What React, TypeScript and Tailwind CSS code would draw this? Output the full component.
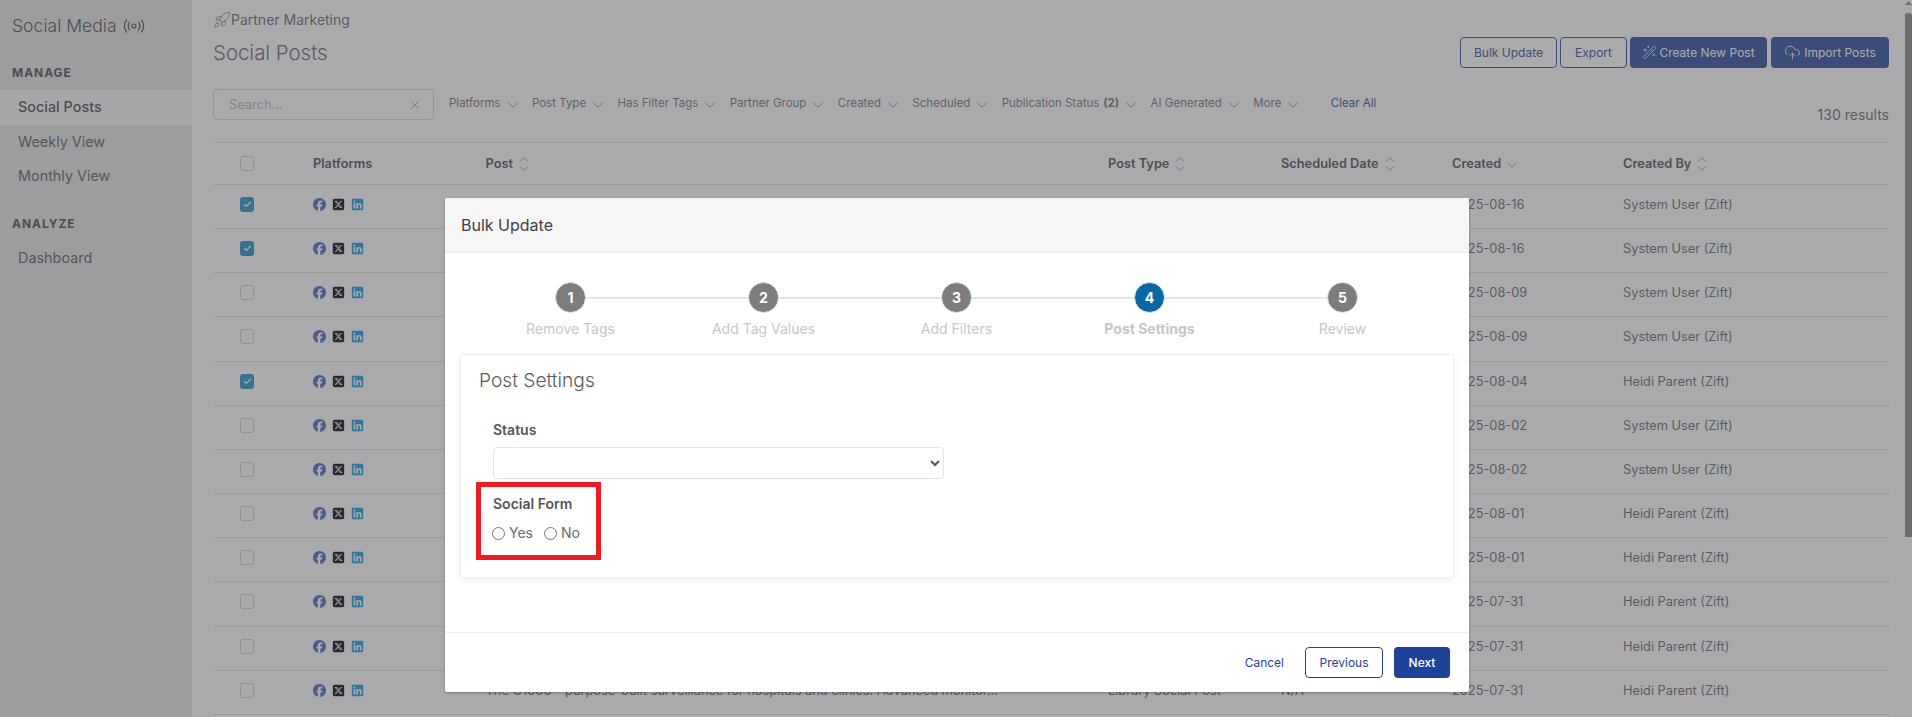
import React from "react";
import { X, Rocket, WandSparkles, CloudUpload, Check } from "lucide-react";
import { FaFacebook, FaSquareXTwitter, FaLinkedin } from "react-icons/fa6";

const filters: [string, string?][] = [
  ["Platforms"],
  ["Post Type"],
  ["Has Filter Tags"],
  ["Partner Group"],
  ["Created"],
  ["Scheduled"],
  ["Publication Status", "(2)"],
  ["AI Generated"],
  ["More"],
];

const rows: { checked: boolean; created: string; by: string }[] = [
  { checked: true, created: "2025-08-16", by: "System User (Zift)" },
  { checked: true, created: "2025-08-16", by: "System User (Zift)" },
  { checked: false, created: "2025-08-09", by: "System User (Zift)" },
  { checked: false, created: "2025-08-09", by: "System User (Zift)" },
  { checked: true, created: "2025-08-04", by: "Heidi Parent (Zift)" },
  { checked: false, created: "2025-08-02", by: "System User (Zift)" },
  { checked: false, created: "2025-08-02", by: "System User (Zift)" },
  { checked: false, created: "2025-08-01", by: "Heidi Parent (Zift)" },
  { checked: false, created: "2025-08-01", by: "Heidi Parent (Zift)" },
  { checked: false, created: "2025-07-31", by: "Heidi Parent (Zift)" },
  { checked: false, created: "2025-07-31", by: "Heidi Parent (Zift)" },
  { checked: false, created: "2025-07-31", by: "Heidi Parent (Zift)" },
];

const steps = ["Remove Tags", "Add Tag Values", "Add Filters", "Post Settings", "Review"];

function Chevron({ className }: { className?: string }) {
  return (
    <svg width="10" height="6" viewBox="0 0 10 6" fill="none" stroke="currentColor" strokeWidth="0.8" className={className}>
      <path d="M0.5 0.8 L5 5.2 L9.5 0.8" />
    </svg>
  );
}

function Sort() {
  return (
    <svg width="10" height="16" viewBox="0 0 10 16" fill="none" stroke="currentColor" strokeWidth="0.8" className="ml-[6px] text-[#77777b]">
      <path d="M1 5.5 L5 1.5 L9 5.5" />
      <path d="M1 10.5 L5 14.5 L9 10.5" />
    </svg>
  );
}

function BroadcastIcon() {
  return (
    <svg width="22" height="14" viewBox="0 0 22 14" fill="none" stroke="currentColor" strokeWidth="1.2" strokeLinecap="round">
      <circle cx="11" cy="7" r="2" />
      <path d="M6.5 3.2c-1.6 2.2-1.6 5.4 0 7.6" />
      <path d="M3.5 1c-2.8 3.4-2.8 8.6 0 12" />
      <path d="M15.5 3.2c1.6 2.2 1.6 5.4 0 7.6" />
      <path d="M18.5 1c2.8 3.4 2.8 8.6 0 12" />
    </svg>
  );
}

export default function App() {
  return (
    <div className="relative flex h-[717px] w-[1912px] overflow-hidden bg-white text-[#626266] [font-family:Inter,'Liberation_Sans',sans-serif]">
      {/* sidebar */}
      <aside className="w-[192px] shrink-0 bg-[#e4e4e6]">
        <div className="flex h-[52px] items-center gap-[6px] pl-[12px] text-[17.6px] font-light text-[#46464a]">
          <span>Social Media</span>
          <BroadcastIcon />
        </div>
        <div className="mt-[13px] pl-[12px] text-[12px] leading-[15px] font-bold tracking-[0.08em] text-[#46464a]">MANAGE</div>
        <div className="mt-[10px] flex h-[35px] items-center bg-[#f8f8f9] pb-[1px] pl-[18px] text-[14.4px] font-medium text-[#46464a]">Social Posts</div>
        <div className="flex h-[34px] items-center pb-[1px] pl-[18px] text-[14.4px] text-[#56565a]">Weekly View</div>
        <div className="flex h-[35px] items-center pb-[1px] pl-[18px] text-[14.4px] text-[#56565a]">Monthly View</div>
        <div className="mt-[22px] pl-[12px] text-[12px] leading-[15px] font-bold tracking-[0.08em] text-[#46464a]">ANALYZE</div>
        <div className="mt-[9px] flex h-[35px] items-center pl-[18px] text-[14.4px] text-[#56565a]">Dashboard</div>
      </aside>

      {/* main */}
      <main className="w-[1697px] shrink-0 pl-[21px]">
        <div className="w-[1676px]">
          <div className="flex h-[30px] items-end text-[14px] leading-[20px] text-[#626266]">
            <Rocket size={18} strokeWidth={1} className="mb-[1px]" />
            <span>Partner Marketing</span>
          </div>
          <div className="flex h-[38px] items-start justify-between">
            <h1 className="mt-[10px] text-[20.4px] leading-[26px] font-light text-[#606064]">Social Posts</h1>
            <div className="mt-[7px] flex gap-[3px] text-[12px]">
              <button className="h-[31px] w-[97px] rounded-[4px] border border-[#1e4299] text-[#2a4690]">Bulk Update</button>
              <button className="h-[31px] w-[67px] rounded-[4px] border border-[#1e4299] text-[#2a4690]">Export</button>
              <button className="flex h-[31px] w-[137px] items-center justify-center gap-[2px] rounded-[4px] bg-[#1e4299] text-white">
                <WandSparkles size={15} strokeWidth={1.25} />
                Create New Post
              </button>
              <button className="ml-[1px] flex h-[31px] w-[118px] items-center justify-center gap-[3px] rounded-[4px] bg-[#1e4299] text-white">
                <CloudUpload size={17} strokeWidth={1.25} />
                Import Posts
              </button>
            </div>
          </div>

          <div className="mt-[21px] flex h-[53px] items-start">
            <div className="flex h-[31px] w-[221px] items-center justify-between rounded-[4px] border border-[#d4d4d8] pr-[11px] pl-[15px] text-[12.8px] text-[#b2b2b6]">
              <span>Search...</span>
              <X size={14} strokeWidth={1.25} className="text-[#808084]" />
            </div>
            <div className="mt-[5px] ml-[15px] flex h-[20px] items-center gap-[14.4px] text-[11.5px] text-[#6e6e72]">
              {filters.map(([label, count]) => (
                <span key={label} className="flex items-center gap-[7px]">
                  <span>
                    {label}
                    {count ? <b className="ml-[4px] font-bold">{count}</b> : null}
                  </span>
                  <Chevron className="mt-[1px]" />
                </span>
              ))}
              <span className="ml-[18px] text-[#2a4690]">Clear All</span>
            </div>
            <div className="mt-[16px] ml-auto text-[14px] leading-[20px] text-[#626266]">130 results</div>
          </div>

          <div className="border-t border-[#dedee0]">
            <div className="flex h-[42px] items-center border-b border-[#dedee0] text-[12.8px] font-semibold text-[#48484e]">
              <div className="w-[100px] pl-[27px]">
                <div className="h-[15px] w-[14px] rounded-[3px] border border-[#c8ccd0]" />
              </div>
              <div className="w-[172.6px]">Platforms</div>
              <div className="flex w-[622.4px] items-center">Post <Sort /></div>
              <div className="flex w-[173px] items-center">Post Type <Sort /></div>
              <div className="flex w-[171px] items-center">Scheduled Date <Sort /></div>
              <div className="flex w-[171px] items-center">
                Created
                <Chevron className="mt-[2px] ml-[6px] text-[#77777b]" />
              </div>
              <div className="flex items-center">Created By <Sort /></div>
            </div>
            {rows.map((r, i) => (
              <div key={i} className="flex h-[44.17px] items-start border-b border-[#dedee0] pt-[12px] text-[12.8px] leading-[16px] text-[#626266]">
                <div className="w-[100px] pl-[27px]">
                  {r.checked ? (
                    <div className="flex h-[15px] w-[14px] items-center justify-center rounded-[3px] bg-[#1a8cc0] text-white">
                      <Check size={9} strokeWidth={3.5} />
                    </div>
                  ) : (
                    <div className="h-[15px] w-[14px] rounded-[3px] border border-[#c8ccd0]" />
                  )}
                </div>
                <div className="flex w-[172.6px] items-center gap-[6px] pt-[1px] text-[13px]">
                  <FaFacebook className="text-[#3f62c4]" />
                  <FaSquareXTwitter className="text-[#000000]" />
                  <FaLinkedin className="text-[#0a9ad8]" />
                </div>
                <div className="w-[622.4px] truncate pr-[40px]">The G1000 – purpose-built surveillance for hospitals and clinics. Advanced monitor...</div>
                <div className="w-[173px]">Library Social Post</div>
                <div className="w-[171px]">N/A</div>
                <div className="w-[171px]">{r.created}</div>
                <div>{r.by}</div>
              </div>
            ))}
          </div>
        </div>
      </main>

      {/* overlay */}
      <div className="absolute inset-0 bg-[#55555a]/50" />

      {/* scrollbar */}
      <div className="absolute top-0 right-0 h-full w-[7px]">
        <svg width="7" height="6" viewBox="0 0 7 6" className="block text-[#6e6e70]">
          <path d="M3.5 1 L7 5 H0 Z" fill="currentColor" />
        </svg>
        <div className="mt-[7px] h-[524px] w-full rounded-t-[3px] bg-[#6e6e70]" />
      </div>

      {/* modal */}
      <div className="absolute top-[198px] left-[445px] flex h-[494px] w-[1024px] flex-col overflow-hidden rounded-[2px] bg-white shadow-[0_1px_3px_rgba(0,0,0,0.3)]">
        <div className="flex h-[55px] shrink-0 items-center border-b border-[#e9ecef] bg-[#f6f6f6] pl-[16px] text-[16px] text-[#404046]">Bulk Update</div>
        <div className="relative flex-1">
          <div className="relative mt-[29px] ml-[29px] flex w-[965px]">
            <div className="absolute top-[15px] right-[96px] left-[96px] h-[2px] bg-[#dfe7ea]" />
            {steps.map((s, i) => (
              <div key={s} className="relative flex w-[193px] flex-col items-center">
                <div className={`flex h-[31px] w-[31px] items-center justify-center rounded-full border border-[#dfe7ea] text-[14px] font-bold text-white ${i === 3 ? "bg-[#0868a5]" : "bg-[#7d7d7d]"}`}>{i + 1}</div>
                <div className={`mt-[7px] text-[14px] leading-[17px] text-[#c4c6ca] ${i === 3 ? "font-bold" : ""}`}>{s}</div>
              </div>
            ))}
          </div>
          <div className="absolute top-[101px] left-[15px] h-[224px] w-[994px] rounded-[2px] border border-[#eeeeee] bg-white pl-[18px] shadow-[0_2px_6px_rgba(0,0,0,0.08)]">
            <div className="mt-[12px] text-[19.2px] leading-[26px] font-light text-[#5a5a60]">Post Settings</div>
            <div className="mt-[27px] pl-[14px]">
              <div className="text-[14px] leading-[20px] font-semibold text-[#55555a]">Status</div>
              <select className="mt-[7px] block h-[32px] w-[451px] rounded-[4px] border border-[#dee6e9] bg-white text-[14px] text-[#55555a]" defaultValue="">
                <option value=""></option>
              </select>
              <div className="mt-[15px] text-[14px] leading-[20px] font-semibold text-[#55555a]">Social Form</div>
              <div className="mt-[9px] flex items-center text-[14px] leading-[20px] text-[#6a6a70]">
                <input type="radio" name="social-form" className="m-0 -ml-[1px] h-[13px] w-[13px]" />
                <span className="ml-[4px]">Yes</span>
                <input type="radio" name="social-form" className="m-0 ml-[11px] h-[13px] w-[13px]" />
                <span className="ml-[4px]">No</span>
              </div>
            </div>
          </div>
        </div>
        <div className="flex h-[60px] shrink-0 items-center justify-end border-t border-[#eeeeee] pr-[19px] text-[12px]">
          <span className="mr-[21px] text-[#1e4299]">Cancel</span>
          <button className="h-[31px] w-[78px] rounded-[4px] border border-[#1e4299] text-[#1e4299]">Previous</button>
          <button className="ml-[11px] h-[31px] w-[56px] rounded-[4px] bg-[#1e4299] font-medium text-white">Next</button>
        </div>
      </div>

      {/* red annotation box */}
      <div className="absolute top-[482px] left-[476px] h-[78px] w-[125px] border-[5px] border-[#ed1c24]" />
    </div>
  );
}
